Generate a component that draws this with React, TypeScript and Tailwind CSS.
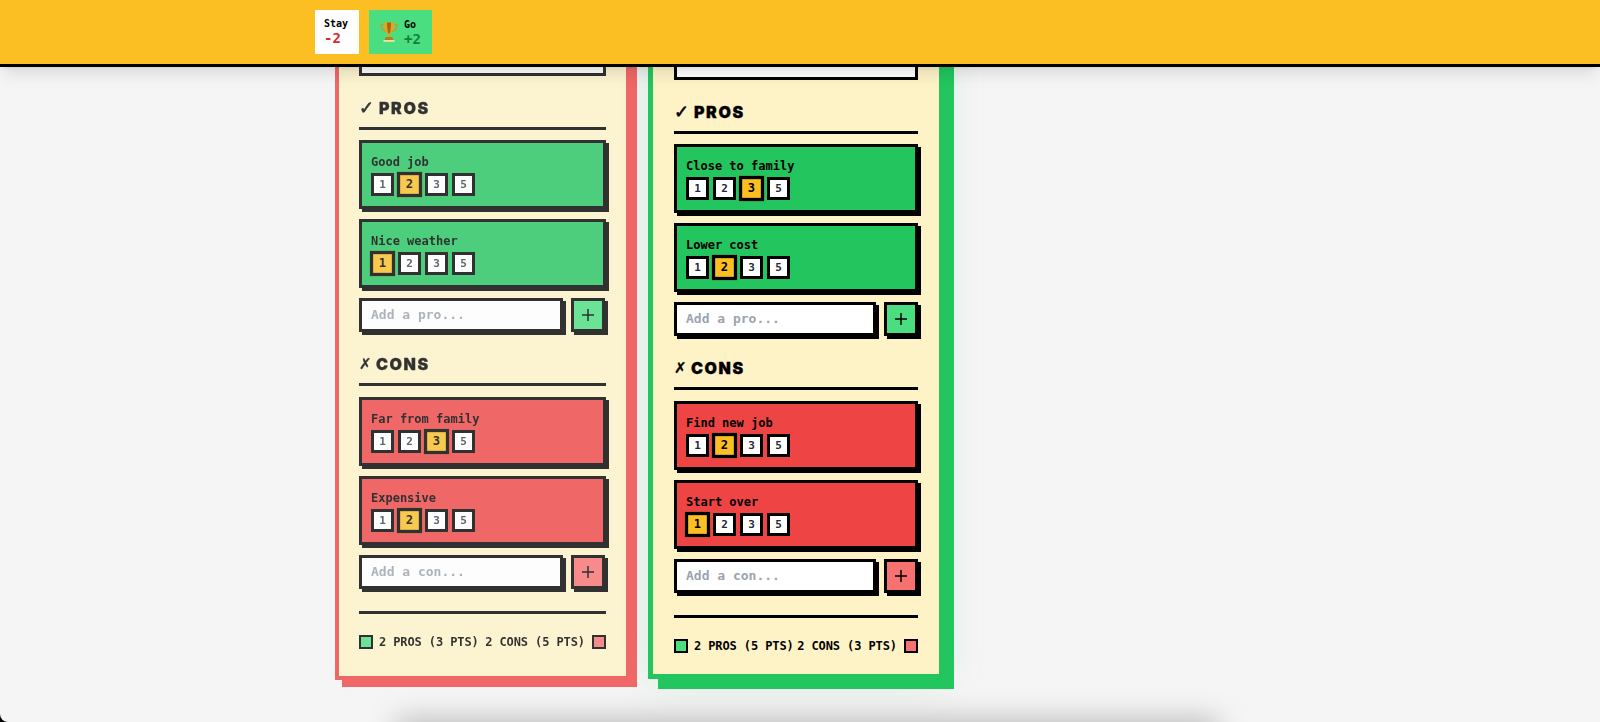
const mono = "font-['DejaVu_Sans_Mono',monospace]";

interface Item {
  label: string;
  score: number;
}

interface ColumnProps {
  pros: Item[];
  cons: Item[];
  prosPts: number;
  consPts: number;
  winner?: boolean;
}

function Trophy() {
  return (
    <svg width="18" height="20" viewBox="0 0 18 20" className="shrink-0">
      <path d="M4 2.5H1c0 3.6 1.6 6.2 5 6.8M14 2.5h3c0 3.6-1.6 6.2-5 6.8" fill="none" stroke="#c9962a" strokeWidth="1.2" />
      <path d="M3.6 .6h10.8c.2 5.4-1.4 10-4.4 11.2H8C5 10.6 3.4 6 3.6 .6z" fill="#e3a51f" />
      <path d="M7 .6h4c0 4.4-.5 8.4-1.4 11.2H8.4C7.5 9 7 5 7 .6z" fill="#a8650f" />
      <rect x="8" y="11.5" width="2" height="3.5" fill="#e3a51f" />
      <path d="M6 15h6l1.5 3h-9z" fill="#b97c16" />
      <rect x="3.5" y="18" width="11" height="1.8" fill="#f3dfae" />
    </svg>
  );
}

function ScoreRow({ score, winner }: { score: number; winner?: boolean }) {
  return (
    <div className="flex gap-[4px] mt-[3px]">
      {[1, 2, 3, 5].map((n) => (
        <button
          key={n}
          className={`w-[23px] h-[23px] border-[3px] border-black flex items-center justify-center text-[11px] font-bold leading-none ${mono} ${
            n === score
              ? "bg-[#fbbf24] text-black scale-110"
              : `bg-white ${winner ? "text-[#1f2937]" : "text-[#374151]"}`
          }`}
        >
          {n}
        </button>
      ))}
    </div>
  );
}

function ItemCard({ item, bg, winner }: { item: Item; bg: string; winner?: boolean }) {
  return (
    <div className={`h-[69px] border-[3px] border-black shadow-[3px_3px_0_#000] px-[9px] pt-[11px] ${bg}`}>
      <p className={`text-[12px] leading-[16px] font-bold text-black ${mono}`}>{item.label}</p>
      <ScoreRow score={item.score} winner={winner} />
    </div>
  );
}

function AddRow({ placeholder, btn, winner }: { placeholder: string; btn: string; winner?: boolean }) {
  return (
    <div className={`flex gap-[8px] h-[34px] ${winner ? "" : "pr-[1px]"}`}>
      <input
        readOnly
        placeholder={placeholder}
        className={`flex-1 min-w-0 bg-white border-[3px] border-black shadow-[3px_3px_0_#000] px-[9px] text-[13px] font-bold placeholder:text-[#9ca3af] outline-none ${mono}`}
      />
      <button className={`w-[34px] h-[34px] border-[3px] border-black shadow-[3px_3px_0_#000] flex items-center justify-center ${btn}`}>
        <svg width="12" height="12" viewBox="0 0 12 12" fill="none" stroke="#000" strokeWidth="1.5">
          <path d="M6 0v12M0 6h12" />
        </svg>
      </button>
    </div>
  );
}

function Heading({ glyph, title, glyphClass }: { glyph: string; title: string; glyphClass: string }) {
  return (
    <h3 className="flex items-center h-[24px] mb-[7px] text-black">
      <span className={`font-['DejaVu_Sans',sans-serif] leading-none ${glyphClass}`}>{glyph}</span>
      <span className="font-['Inter',sans-serif] font-black text-[16px] tracking-[1.6px] [-webkit-text-stroke:0.3px_black]">{title}</span>
    </h3>
  );
}

function Column({ pros, cons, prosPts, consPts, winner }: ColumnProps) {
  return (
    <section
      className={
        winner
          ? "w-[296px] border-[5px] border-[#22c55e] bg-[#fef3c7] pt-[19px] px-[21px] pb-[19px] shadow-[10px_10px_0_#22c55e,0_0_40px_rgba(34,197,94,0.15)]"
          : "w-[295px] border-[4px] border-[#ef4444] bg-[#fef3c7] pt-[16px] px-[20px] pb-[25px] shadow-[7px_7px_0_#ef4444] opacity-80"
      }
    >
      <div className="h-[52px] bg-white border-[3px] border-black" />

      <div className="mt-[20px]">
        <Heading glyph="✓" title="PROS" glyphClass="w-[20px] text-[18px] font-bold [-webkit-text-stroke:0.6px_black]" />
        <div className="border-t-[3px] border-black pt-[10px] flex flex-col gap-[10px]">
          {pros.map((item) => (
            <ItemCard key={item.label} item={item} bg="bg-[#22c55e]" winner={winner} />
          ))}
          <AddRow placeholder="Add a pro..." btn="bg-[#4ade80]" winner={winner} />
        </div>
      </div>

      <div className="mt-[20px]">
        <Heading glyph="✗" title="CONS" glyphClass="w-[17px] text-[15px] font-normal [-webkit-text-stroke:0.3px_black]" />
        <div className="border-t-[3px] border-black pt-[11px] flex flex-col gap-[10px]">
          {cons.map((item) => (
            <ItemCard key={item.label} item={item} bg="bg-[#ef4444]" winner={winner} />
          ))}
          <AddRow placeholder="Add a con..." btn="bg-[#f87171]" winner={winner} />
        </div>
      </div>

      <div className={`mt-[22px] border-t-[3px] border-black pt-[19px] flex items-center justify-between text-[12px] font-bold tracking-[-0.1px] text-black whitespace-nowrap ${mono}`}>
        <div className="flex items-center gap-[6px]">
          <span className="w-[14px] h-[14px] border-2 border-black bg-[#4ade80]" />
          <span>2 PROS ({prosPts} PTS)</span>
        </div>
        <div className="flex items-center gap-[7px]">
          <span>2 CONS ({consPts} PTS)</span>
          <span className="w-[14px] h-[14px] border-2 border-black bg-[#f87171]" />
        </div>
      </div>
    </section>
  );
}

export default function App() {
  return (
    <div className="w-[1600px] h-[722px] bg-black">
      <div className="relative w-full h-full bg-[#f5f5f5] overflow-hidden rounded-bl-[8px]">
        <header className="absolute top-0 left-0 right-0 z-10 h-[67px] bg-[#fbbf24] border-b-[3px] border-black shadow-lg pl-[315px] pt-[10px] flex gap-[10px]">
          <div className={`w-[44px] h-[44px] bg-white pl-[9px] pt-[7px] ${mono}`}>
            <p className="text-[10px] leading-[13px] font-bold text-black">Stay</p>
            <p className="text-[14px] leading-[16px] font-bold text-[#dc2626]">-2</p>
          </div>
          <div className={`w-[63px] h-[44px] bg-[#4ade80] pl-[11px] flex items-center gap-[6px] ${mono}`}>
            <Trophy />
            <div>
              <p className="text-[10px] leading-[13px] font-bold text-black">Go</p>
              <p className="text-[14px] leading-[16px] font-bold text-[#15803d]">+2</p>
            </div>
          </div>
        </header>

        <main className="flex items-start gap-[18px] pl-[335px] pt-[4px]">
          <Column
            pros={[{ label: "Good job", score: 2 }, { label: "Nice weather", score: 1 }]}
            cons={[{ label: "Far from family", score: 3 }, { label: "Expensive", score: 2 }]}
            prosPts={3}
            consPts={5}
          />
          <Column
            winner
            pros={[{ label: "Close to family", score: 3 }, { label: "Lower cost", score: 2 }]}
            cons={[{ label: "Find new job", score: 2 }, { label: "Start over", score: 1 }]}
            prosPts={5}
            consPts={3}
          />
        </main>

        {/* shadow of the next block, just off screen */}
        <div className="absolute left-[405px] top-[728px] w-[805px] h-[40px] shadow-[0_0_30px_8px_rgba(0,0,0,0.25)]" />
      </div>
    </div>
  );
}
